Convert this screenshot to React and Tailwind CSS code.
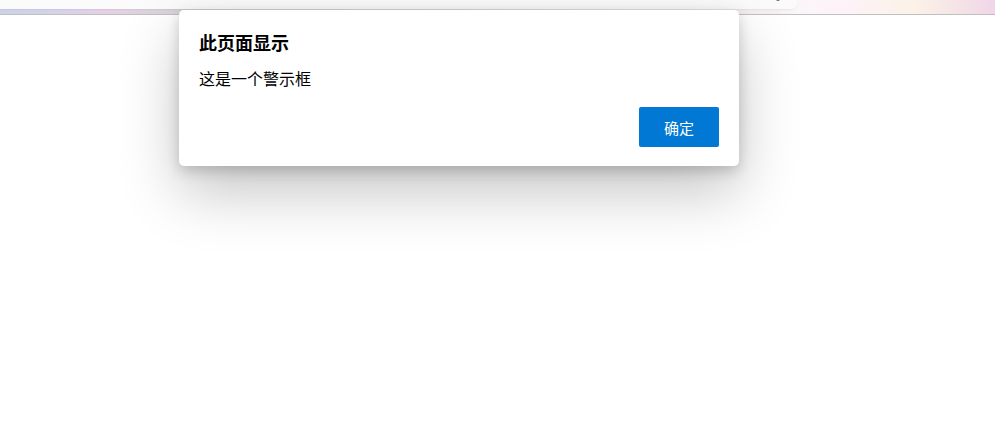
import React from "react";

export default function App() {
  const font = { fontFamily: '"Noto Sans CJK SC", "Noto Sans", sans-serif' };
  return (
    <div className="relative w-[995px] h-[443px] bg-white overflow-hidden" style={font}>
      {/* browser toolbar strip */}
      <div className="relative h-[15px] border-b border-[#c0c0c0] bg-[linear-gradient(90deg,#ccd3e8_0%,#d3d3ea_5%,#e6cfe7_10%,#ddd3de_15%,#d6d6d6_19%,#dcdcdc_40%,#f4f0f4_78%,#fbf6f9_80%,#fdf2f8_85%,#fbf2e8_92%,#f0d6e7_100%)]">
        <div className="absolute left-[-10px] top-[-10px] w-[807px] h-[19px] bg-[#fbfbfb] rounded-br-[5px] shadow-[0_1px_2px_rgba(0,0,0,0.06)]">
          <div className="absolute left-[786px] top-[9px] w-[4px] h-[2px] rounded-b-full bg-[#666]" />
        </div>
      </div>

      {/* alert dialog */}
      <div className="absolute left-[179px] top-[10px] w-[560px] h-[156px] bg-white rounded-[5px] px-5 pt-5 pb-[19px] flex flex-col shadow-[0_26px_60px_rgba(0,0,0,0.23),0_5px_14px_rgba(0,0,0,0.18)]">
        <div className="text-[18px] leading-[24px] font-bold text-black">此页面显示</div>
        <div className="mt-3 text-[16px] leading-[24px] text-black">这是一个警示框</div>
        <div className="mt-auto flex justify-end">
          <button className="w-[80px] h-[40px] bg-[#0078d4] rounded-[2px] text-white text-[15px] leading-none">
            确定
          </button>
        </div>
      </div>
    </div>
  );
}
